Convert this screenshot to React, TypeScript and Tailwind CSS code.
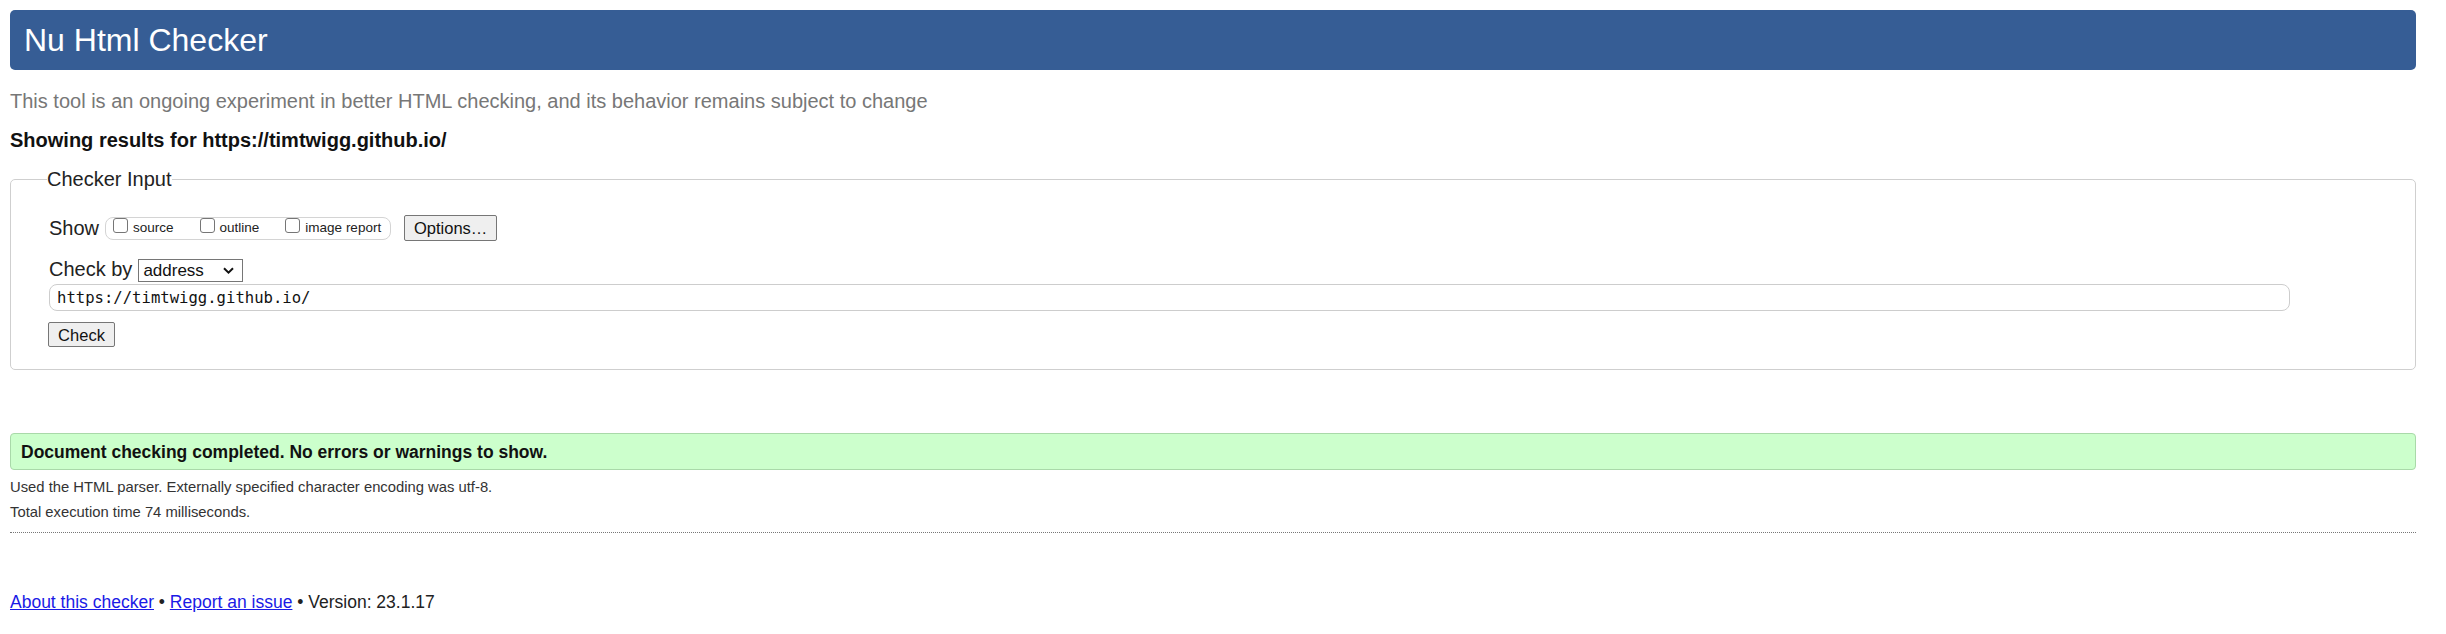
import React from "react";

function Box() {
  return (
    <span className="block w-[15px] h-[15px] shrink-0 self-start rounded-[3px] border border-[#767676] bg-white" />
  );
}

export default function App() {
  return (
    <div className="h-[634px] overflow-hidden bg-white pl-[10px] pr-[30px] pt-[10px] font-['Liberation_Sans',Arial,sans-serif] text-[#222]">
      <header className="flex h-[60px] items-center rounded-[5px] bg-[#365d95] pl-[14px]">
        <h1 className="text-[32px] leading-[32px] text-white">Nu Html Checker</h1>
      </header>

      <p className="mt-[20px] text-[20px] leading-[23px] text-[#777]">
        This tool is an ongoing experiment in better HTML checking, and its behavior remains subject to change
      </p>
      <p className="mt-[16px] text-[20px] font-bold leading-[23px] text-[#111]">
        Showing results for https://timtwigg.github.io/
      </p>

      <fieldset className="mt-[16px] rounded-[5px] border border-[#cfcfcf] pb-[22px] pl-[38px] pr-[38px]">
        <legend className="ml-[-2px] text-[20px] leading-[23px] text-[#222]">Checker Input</legend>

        <div className="mt-[24px] flex h-[26px] items-center">
          <span className="text-[20px] leading-[23px]">Show</span>
          <div className="ml-[6px] flex h-[23px] items-center rounded-[8px] border border-[#d4d4d4] pl-[7px] pr-[9px] text-[13.5px] leading-[16px]">
            <Box />
            <span className="ml-[5px]">source</span>
            <span className="ml-[26px] flex h-full items-center">
              <Box />
            </span>
            <span className="ml-[5px]">outline</span>
            <span className="ml-[26px] flex h-full items-center">
              <Box />
            </span>
            <span className="ml-[5px]">image report</span>
          </div>
          <div className="ml-[13px] flex h-[26px] w-[93px] items-center justify-center rounded-[2px] border border-[#767676] bg-[#efefef] text-[16.5px] leading-[18px] text-[#111]">
            Options…
          </div>
        </div>

        <div className="mt-[17px] flex items-start">
          <span className="text-[20px] leading-[23px]">Check by</span>
          <div className="ml-[6px] mt-[1px] flex h-[23px] w-[105px] items-center justify-between border border-[#767676] pl-[4px] pr-[8px] text-[17px] leading-[19px] text-[#111]">
            <span>address</span>
            <svg width="11" height="7" viewBox="0 0 11 7" fill="none">
              <path d="M1 1.2 L5.5 5.6 L10 1.2" stroke="#111" strokeWidth="2" />
            </svg>
          </div>
        </div>

        <div className="mt-[2px] flex h-[27px] w-[2241px] items-center rounded-[8px] border border-[#cdcdcd] pl-[7px] font-['DejaVu_Sans_Mono','Liberation_Mono',monospace] text-[15.6px] leading-[18px] text-[#111]">
          https://timtwigg.github.io/
        </div>

        <div className="ml-[-1px] mt-[11px] flex h-[25px] w-[67px] items-center justify-center rounded-[2px] border border-[#767676] bg-[#efefef] text-[16.5px] leading-[18px] text-[#111]">
          Check
        </div>
      </fieldset>

      <div className="mt-[63px] flex h-[37px] items-center rounded-[4px] border border-[#a9d9a9] bg-[#ccffcc] pl-[10px] text-[17.5px] font-bold leading-[20px] text-[#111]">
        Document checking completed. No errors or warnings to show.
      </div>

      <p className="mt-[9px] text-[14.8px] leading-[17px] text-[#333]">
        Used the HTML parser. Externally specified character encoding was utf-8.
      </p>
      <p className="mt-[8px] text-[14.8px] leading-[17px] text-[#333]">Total execution time 74 milliseconds.</p>

      <hr className="mt-[11px] border-0 border-t border-dotted border-[#777]" />

      <p className="mt-[59px] text-[17.5px] leading-[20px] text-[#222]">
        <a className="text-[#1a1ae6] underline" href="#">About this checker</a>
        {" • "}
        <a className="text-[#1a1ae6] underline" href="#">Report an issue</a>
        {" • Version: 23.1.17"}
      </p>
    </div>
  );
}
